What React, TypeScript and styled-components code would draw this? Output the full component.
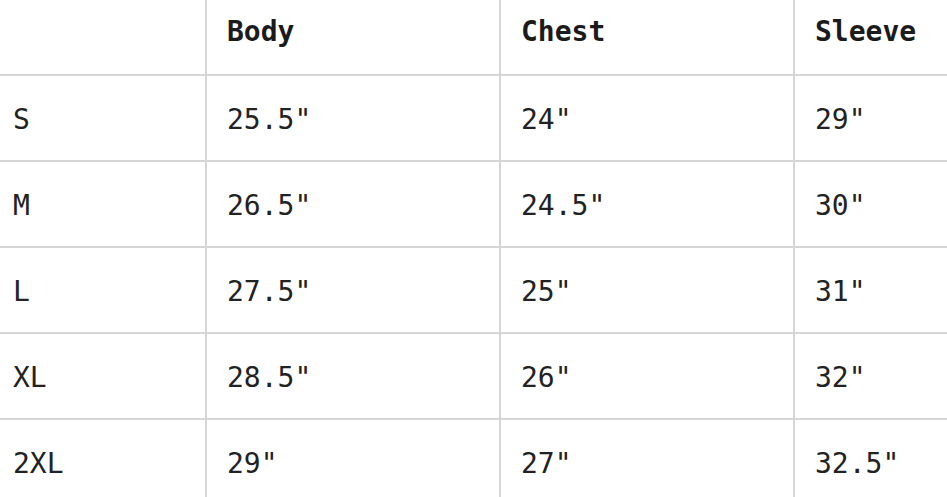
import styled, { createGlobalStyle } from 'styled-components';

interface SizeRow {
  size: string;
  body: string;
  chest: string;
  sleeve: string;
}

const rows: SizeRow[] = [
  { size: 'S', body: '25.5"', chest: '24"', sleeve: '29"' },
  { size: 'M', body: '26.5"', chest: '24.5"', sleeve: '30"' },
  { size: 'L', body: '27.5"', chest: '25"', sleeve: '31"' },
  { size: 'XL', body: '28.5"', chest: '26"', sleeve: '32"' },
  { size: '2XL', body: '29"', chest: '27"', sleeve: '32.5"' },
];

const GlobalStyle = createGlobalStyle`
  html, body {
    margin: 0;
    padding: 0;
    background: #ffffff;
    overflow: hidden;
  }
`;

const App = () => {
  return (
    <>
      <GlobalStyle />
      <Table>
        <colgroup>
          <col style={{ width: 205 }} />
          <col style={{ width: 294 }} />
          <col style={{ width: 294 }} />
          <col style={{ width: 294 }} />
        </colgroup>
        <thead>
          <tr>
            <HeadCell first />
            <HeadCell>Body</HeadCell>
            <HeadCell>Chest</HeadCell>
            <HeadCell>Sleeve</HeadCell>
          </tr>
        </thead>
        <tbody>
          {rows.map((row) => (
            <tr key={row.size}>
              <Cell first>{row.size}</Cell>
              <Cell>{row.body}</Cell>
              <Cell>{row.chest}</Cell>
              <Cell>{row.sleeve}</Cell>
            </tr>
          ))}
        </tbody>
      </Table>
    </>
  );
};

export default App;

const Table = styled.table`
  width: 1087px;
  table-layout: fixed;
  border-collapse: separate;
  border-spacing: 0;
  font-family: 'DejaVu Sans Mono', 'Liberation Mono', monospace;
  font-size: 28px;
  line-height: 28px;
`;

const HeadCell = styled.th<{ first?: boolean }>`
  box-sizing: content-box;
  padding: 18px 0 0 ${(props) => (props.first ? '13px' : '20px')};
  height: 56px;
  vertical-align: top;
  text-align: left;
  font-weight: 700;
  color: #1b1b1b;
  border-bottom: 2px solid #d6d6d6;
  border-left: ${(props) => (props.first ? 'none' : '2px solid #d6d6d6')};
`;

const Cell = styled.td<{ first?: boolean }>`
  box-sizing: content-box;
  padding: 30px 0 0 ${(props) => (props.first ? '13px' : '20px')};
  height: 54px;
  vertical-align: top;
  text-align: left;
  font-weight: 400;
  color: #222222;
  border-bottom: 2px solid #d6d6d6;
  border-left: ${(props) => (props.first ? 'none' : '2px solid #d6d6d6')};
`;
